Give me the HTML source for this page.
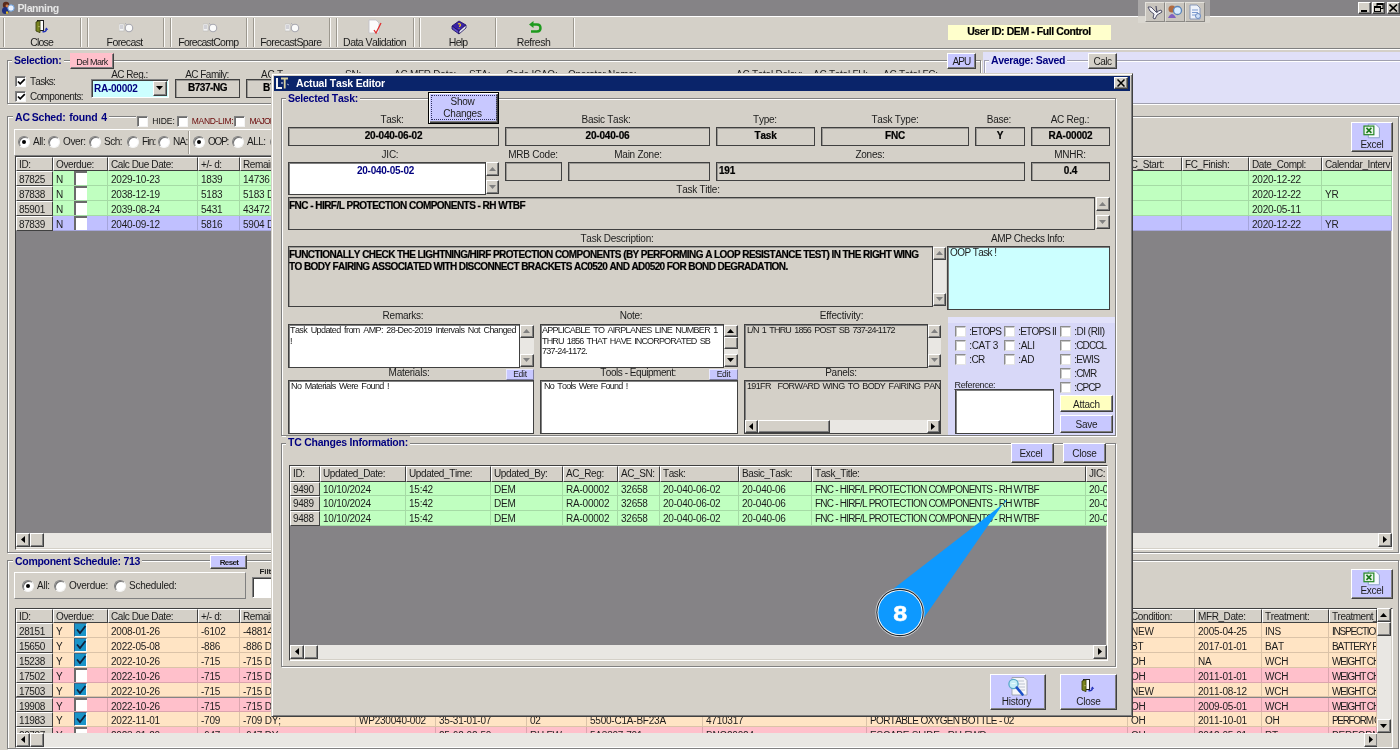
<!DOCTYPE html>
<html>
<head>
<meta charset="utf-8">
<title>Planning</title>
<style>
*{box-sizing:border-box;margin:0;padding:0}
html,body{width:1400px;height:753px;overflow:hidden;background:#d4d0c8;font-family:"Liberation Sans",sans-serif;font-size:10px;color:#1c1c1c;font-kerning:none}
.a{position:absolute}
.t{position:absolute;white-space:nowrap;line-height:12px;font-size:10px;letter-spacing:-0.25px}
.b{font-weight:bold}
.nv{color:#00007f}
.c{text-align:center}
.fld{position:absolute;border:1px solid #404040;box-shadow:inset 1px 1px 0 #9a9894;background:#d4d0c8;font-weight:bold;font-size:10px;letter-spacing:-0.2px;line-height:12px;overflow:hidden;white-space:nowrap;padding-top:2px;color:#000;-webkit-text-stroke:0.2px #000}
.fld.l{padding-left:2px}
.ta{position:absolute;border:1px solid #404040;box-shadow:inset 1px 1px 0 #808080;background:#fff;font-size:9px;line-height:11px;overflow:hidden;padding:2px 2px}
.grp{position:absolute;border:1px solid #808080;box-shadow:1px 1px 0 #fff, inset 1px 1px 0 #fff}
.glab{position:absolute;background:#d4d0c8;font-weight:bold;color:#00007f;font-size:10.5px;line-height:12px;white-space:nowrap;padding:0 2px}
.btn{position:absolute;border:1px solid;border-color:#fff #404040 #404040 #fff;box-shadow:inset -1px -1px 0 #808080;background:#d4d0c8;text-align:center;font-size:10px;letter-spacing:-0.25px;line-height:12px;white-space:nowrap;overflow:hidden}
.lav{background:#c8c8ff}
.cb{position:absolute;width:11px;height:11px;background:#fff;border:1px solid;border-color:#808080 #f4f4f4 #f4f4f4 #808080;box-shadow:inset 1px 1px 0 #6c6c6c}
.rd{position:absolute;width:12px;height:12px;border-radius:50%;background:#fff;border:1px solid;border-color:#808080 #f4f4f4 #f4f4f4 #808080;box-shadow:inset 1px 1px 0 #707070}
.rd.on:after{content:"";position:absolute;left:3px;top:3px;width:4px;height:4px;background:#000;border-radius:50%}
.grid{position:absolute;background:#858386;overflow:hidden;border:1px solid #404040;border-right-color:#fff;border-bottom-color:#fff;box-shadow:inset -1px -1px 0 #d4d0c8}
.row{position:absolute;left:0;height:15px;white-space:nowrap}
.cell{position:absolute;top:0;height:15px;border-right:1px solid rgba(0,0,0,0.14);border-bottom:1px solid rgba(0,0,0,0.14);font-size:10px;letter-spacing:-0.22px;line-height:15px;padding-left:3px;overflow:hidden;white-space:nowrap}
.hc{position:absolute;top:0;height:15px;background:#d4d0c8;border:1px solid;border-color:#fff #404040 #404040 #fff;font-size:10px;letter-spacing:-0.4px;line-height:13px;padding-left:2px;overflow:hidden;white-space:nowrap}
.g{background:#c0ffc0}.s{background:#c0c0ff}.p{background:#ffe4c4}.k{background:#ffc0cb}
.sb{position:absolute;background:#e9e7e3}
.sbb{position:absolute;background:#d4d0c8;border:1px solid;border-color:#fff #404040 #404040 #fff;box-shadow:inset -1px -1px 0 #808080}
.vsep{position:absolute;width:2px;border-left:1px solid #9c988f;border-right:1px solid #fbfaf8}

</style>
</head>
<body>
<div style="position:absolute;left:0;top:0;width:1400px;height:753px;will-change:transform">
<div class="a" style="left:0px;top:0px;width:1400px;height:16px;background:#858386"></div>
<svg class="a" style="left:1px;top:1px" width="15" height="14" viewBox="0 0 15 14"><circle cx="5" cy="4" r="3.2" fill="#5a2a1a"/><circle cx="4.5" cy="9.5" r="3.5" fill="#203080"/><circle cx="10" cy="7" r="3.2" fill="#e8f0ff" stroke="#6aa0e0" stroke-width="1"/><circle cx="6" cy="5" r="1.4" fill="#d08050"/><rect x="5" y="10.5" width="2.2" height="2.2" fill="#e8c020"/></svg>
<div class="t b" style="left:17.5px;top:2px;color:#e6e6e6;font-size:10.5px;letter-spacing:-0.393px;">Planning</div>
<div class="btn" style="left:1358px;top:2px;width:13px;height:12px;"></div>
<div class="btn" style="left:1372px;top:2px;width:13px;height:12px;"></div>
<div class="btn" style="left:1387px;top:2px;width:13px;height:12px;"></div>
<div class="a" style="left:1361px;top:10px;width:6px;height:2px;background:#000"></div>
<svg class="a" style="left:1374px;top:3px" width="10" height="10" viewBox="0 0 10 10"><rect x="3" y="0.5" width="6" height="5" fill="none" stroke="#000" stroke-width="1"/><rect x="3" y="0" width="6" height="2" fill="#000"/><rect x="0.5" y="3.5" width="6" height="5" fill="#d4d0c8" stroke="#000" stroke-width="1"/><rect x="0" y="3" width="7" height="2" fill="#000"/></svg>
<svg class="a" style="left:1389px;top:4px" width="9" height="8" viewBox="0 0 9 8"><path d="M0.5 0.5 L8 7.5 M8 0.5 L0.5 7.5" stroke="#000" stroke-width="1.6"/></svg>
<div class="a" style="left:0px;top:16px;width:1400px;height:1px;background:#fff"></div>
<div class="a" style="left:0px;top:48px;width:1400px;height:1px;background:#808080"></div>
<div class="a" style="left:0px;top:49px;width:1400px;height:1px;background:#fff"></div>
<div class="vsep" style="left:3px;top:18px;width:2px;height:29px;"></div>
<div class="vsep" style="left:80px;top:18px;width:2px;height:29px;"></div>
<div class="vsep" style="left:87px;top:18px;width:2px;height:29px;"></div>
<div class="vsep" style="left:163px;top:18px;width:2px;height:29px;"></div>
<div class="vsep" style="left:170px;top:18px;width:2px;height:29px;"></div>
<div class="vsep" style="left:246px;top:18px;width:2px;height:29px;"></div>
<div class="vsep" style="left:253px;top:18px;width:2px;height:29px;"></div>
<div class="vsep" style="left:329px;top:18px;width:2px;height:29px;"></div>
<div class="vsep" style="left:336px;top:18px;width:2px;height:29px;"></div>
<div class="vsep" style="left:413px;top:18px;width:2px;height:29px;"></div>
<div class="vsep" style="left:419px;top:18px;width:2px;height:29px;"></div>
<div class="vsep" style="left:495px;top:18px;width:2px;height:29px;"></div>
<div class="vsep" style="left:573px;top:18px;width:2px;height:29px;"></div>
<div class="t c " style="left:-8.399999999999999px;top:35.5px;width:100px;font-size:10.5px;letter-spacing:-0.872px;">Close</div>
<div class="t c " style="left:74.6px;top:35.5px;width:100px;font-size:10.5px;letter-spacing:-0.607px;">Forecast</div>
<div class="t c " style="left:158.29999999999998px;top:35.5px;width:100px;font-size:10.5px;letter-spacing:-0.738px;">ForecastComp</div>
<div class="t c " style="left:240.90000000000003px;top:35.5px;width:100px;font-size:10.5px;letter-spacing:-0.583px;">ForecastSpare</div>
<div class="t c " style="left:324.6px;top:35.5px;width:100px;font-size:10.5px;letter-spacing:-0.548px;">Data Validation</div>
<div class="t c " style="left:408.1px;top:35.5px;width:100px;font-size:10.5px;letter-spacing:-0.777px;">Help</div>
<div class="t c " style="left:483.6px;top:35.5px;width:100px;font-size:10.5px;letter-spacing:-0.467px;">Refresh</div>
<svg class="a" style="left:35px;top:19px" width="14" height="15" viewBox="0 0 14 15"><rect x="2.5" y="1.5" width="6" height="10" fill="#fff" stroke="#202020" stroke-width="1"/><path d="M1 3 L5 1.8 V13.6 L1 12 Z" fill="#7a8420" stroke="#3c4410" stroke-width="0.9"/><path d="M4 7 V8.2" stroke="#e8e0a0" stroke-width="0.8"/><path d="M7.5 12.6 Q11 13.4 11.4 10.4" stroke="#2030b8" stroke-width="1.5" fill="none"/><path d="M9.6 10.6 L11.6 8.6 L13.2 11 Z" fill="#2030b8"/></svg>
<svg class="a" style="left:119px;top:21px" width="16" height="13" viewBox="0 0 16 13"><rect x="0" y="3" width="5" height="7" fill="#f4f4f4" stroke="#b8b8b8" stroke-width="0.6"/><path d="M1 5 H4 M1 7 H4" stroke="#9090a0" stroke-width="0.7"/><circle cx="10" cy="7" r="3.7" fill="#fafafa" stroke="#a8a8b0" stroke-width="1.1"/><path d="M6 2 L8 4" stroke="#b0b0b8" stroke-width="1"/></svg>
<svg class="a" style="left:203px;top:21px" width="16" height="13" viewBox="0 0 16 13"><rect x="0" y="3" width="5" height="7" fill="#f4f4f4" stroke="#b8b8b8" stroke-width="0.6"/><path d="M1 5 H4 M1 7 H4" stroke="#9090a0" stroke-width="0.7"/><circle cx="10" cy="7" r="3.7" fill="#fafafa" stroke="#a8a8b0" stroke-width="1.1"/><path d="M6 2 L8 4" stroke="#b0b0b8" stroke-width="1"/></svg>
<svg class="a" style="left:285px;top:21px" width="16" height="13" viewBox="0 0 16 13"><rect x="0" y="3" width="5" height="7" fill="#f4f4f4" stroke="#b8b8b8" stroke-width="0.6"/><path d="M1 5 H4 M1 7 H4" stroke="#9090a0" stroke-width="0.7"/><circle cx="10" cy="7" r="3.7" fill="#fafafa" stroke="#a8a8b0" stroke-width="1.1"/><path d="M6 2 L8 4" stroke="#b0b0b8" stroke-width="1"/></svg>
<svg class="a" style="left:368px;top:19px" width="16" height="16" viewBox="0 0 16 16"><path d="M1 1 H8 L11 4 V14 H1 Z" fill="#fbfbfb" stroke="#c0c0c8" stroke-width="0.8"/><path d="M6 11 L8 14 L13 4" stroke="#e03030" stroke-width="1.3" fill="none"/></svg>
<svg class="a" style="left:451px;top:20px" width="16" height="15" viewBox="0 0 16 15"><path d="M1 6 L8 1 L15 5 L8 11 Z" fill="#3a22a8" stroke="#1a0e60" stroke-width="0.8"/><path d="M1 6 L8 11 V14 L1 9 Z" fill="#5a48c8" stroke="#1a0e60" stroke-width="0.8"/><path d="M8 11 L15 5 V8 L8 14 Z" fill="#e8e8f4" stroke="#1a0e60" stroke-width="0.8"/><path d="M7 4 Q9 3 9.5 5 Q9 6.5 8 6.5 M8 8 V8.6" stroke="#f0d020" stroke-width="1.2" fill="none"/></svg>
<svg class="a" style="left:528px;top:21px" width="14" height="13" viewBox="0 0 14 13"><path d="M4 3.5 H9 Q12.5 3.5 12.5 7 Q12.5 10.5 9 10.5 H3" stroke="#1e9a1e" stroke-width="2.4" fill="none"/><path d="M5.5 0 L1 3.5 L5.5 7 Z" fill="#1e9a1e"/></svg>
<div class="a" style="left:1138px;top:0px;width:72px;height:16px;background:#a9a7a7"></div>
<div class="a" style="left:1138px;top:16px;width:72px;height:7px;background:#dad7d0"></div>
<div class="a" style="left:1145px;top:2px;width:20px;height:20px;background:#c9c5be;border:1px solid;border-color:#e4e2dc #8a8884 #8a8884 #e4e2dc"></div>
<div class="a" style="left:1165px;top:2px;width:20px;height:20px;background:#c9c5be;border:1px solid;border-color:#e4e2dc #8a8884 #8a8884 #e4e2dc"></div>
<div class="a" style="left:1185px;top:2px;width:20px;height:20px;background:#c9c5be;border:1px solid;border-color:#e4e2dc #8a8884 #8a8884 #e4e2dc"></div>
<svg class="a" style="left:1147px;top:4px" width="16" height="16" viewBox="0 0 16 16"><path d="M1 3 L4 3 L9 8 L14 6 L15 8 L10 11 L8 15 L6 14 L7 10 L3 7 Z" fill="#f4f4f8" stroke="#505068" stroke-width="1"/><path d="M9 2 L10 9" stroke="#505068" stroke-width="1.2"/></svg>
<svg class="a" style="left:1167px;top:4px" width="16" height="16" viewBox="0 0 16 16"><circle cx="5" cy="5" r="3.5" fill="#b06a40"/><path d="M1 14 Q5 6 9 14 Z" fill="#8060c0"/><circle cx="10.5" cy="6.5" r="4" fill="#d8ecff" stroke="#5a84b8" stroke-width="1.3"/></svg>
<svg class="a" style="left:1187px;top:4px" width="16" height="16" viewBox="0 0 16 16"><path d="M3 1 H10 L13 4 V15 H3 Z" fill="#eef2fa" stroke="#8898b8" stroke-width="1"/><path d="M5 6 H11 M5 8.5 H11 M5 11 H9" stroke="#7a9ad0" stroke-width="1"/><circle cx="11" cy="12" r="2.5" fill="#cfe0f8" stroke="#6a8ac0"/></svg>
<div class="a" style="left:948px;top:25px;width:163px;height:15px;background:#ffffcc"></div>
<div class="t c b" style="left:939.0px;top:25px;width:180px;color:#000;-webkit-text-stroke:0.2px #000;font-size:10.5px;letter-spacing:-0.413px;">User ID: DEM - Full Control</div>
<div class="grp" style="left:7px;top:60px;width:974px;height:44px;"></div>
<div class="glab" style="left:12px;top:54px;font-size:10.5px;letter-spacing:-0.269px;">Selection:</div>
<div class="btn " style="left:70px;top:53px;width:44px;height:16px;padding-top:2px;background:#ffc0cb;border-color:#ffc0cb #404040 #404040 #ffc0cb;font-size:9px;letter-spacing:-0.589px;">Del Mark</div>
<div class="cb" style="left:15px;top:76px;"><svg width="9" height="9" viewBox="0 0 9 9" style="position:absolute;left:1px;top:1px"><path d="M1 3.5 L3.2 5.8 L7.8 1.2" stroke="#000" stroke-width="1.7" fill="none"/></svg></div>
<div class="t " style="left:30px;top:76px;font-size:10px;letter-spacing:-0.742px;">Tasks:</div>
<div class="cb" style="left:15px;top:91px;"><svg width="9" height="9" viewBox="0 0 9 9" style="position:absolute;left:1px;top:1px"><path d="M1 3.5 L3.2 5.8 L7.8 1.2" stroke="#000" stroke-width="1.7" fill="none"/></svg></div>
<div class="t " style="left:30px;top:91px;font-size:10px;letter-spacing:-0.589px;">Components:</div>
<div class="t c " style="left:89.5px;top:69px;width:80px;font-size:10px;letter-spacing:-0.497px;">AC Reg.:</div>
<div class="a" style="left:91px;top:79px;width:78px;height:19px;background:#ccffff;border:1px solid;border-color:#808080 #fff #fff #808080;box-shadow:inset 1px 1px 0 #404040"></div>
<div class="t b nv" style="left:94px;top:83px;font-size:10px">RA-00002</div>
<div class="sbb" style="left:153px;top:81px;width:14px;height:15px"></div><svg class="a" style="left:156px;top:86px" width="7" height="4" viewBox="0 0 7 4"><path d="M0 0 L7 0 L3.5 4 Z" fill="#000"/></svg>
<div class="t c " style="left:167.0px;top:69px;width:80px;font-size:10px;letter-spacing:-0.531px;">AC Family:</div>
<div class="fld c" style="left:175px;top:79px;width:65px;height:19px;font-size:10px;letter-spacing:-0.464px;">B737-NG</div>
<div class="t " style="left:261px;top:69px;font-size:10px">AC T</div>
<div class="fld l" style="left:246px;top:79px;width:54px;height:19px;padding-left:16px">B737-800</div>
<div class="t " style="left:345px;top:69px;font-size:10px">SN:</div>
<div class="t " style="left:394px;top:69px;font-size:10px">AC MFR Date:</div>
<div class="t " style="left:469px;top:69px;font-size:10px">STA:</div>
<div class="t " style="left:506px;top:69px;font-size:10px">Code ICAO:</div>
<div class="t " style="left:568px;top:69px;font-size:10px">Operator Name:</div>
<div class="t " style="left:736px;top:69px;font-size:10px">AC Total Delay:</div>
<div class="t " style="left:813px;top:69px;font-size:10px">AC Total FH:</div>
<div class="t " style="left:883px;top:69px;font-size:10px">AC Total FC:</div>
<div class="btn lav" style="left:947px;top:53px;width:29px;height:16px;padding-top:2px;font-size:10px;letter-spacing:-0.921px;">APU</div>
<div class="a" style="left:983px;top:52px;width:417px;height:53px;background:#e0e0f8"></div>
<div class="a" style="left:984px;top:60px;width:420px;height:44px;border:1px solid #a0a0b0;box-shadow:inset 1px 1px 0 #fff,0 1px 0 #fff"></div>
<div class="glab" style="left:989px;top:54px;background:#e0e0f8;font-size:10.5px;letter-spacing:-0.343px;">Average: Saved</div>
<div class="btn " style="left:1088px;top:53px;width:29px;height:16px;padding-top:2px;font-size:10px;letter-spacing:-0.479px;">Calc</div>
<div class="grp" style="left:7px;top:116px;width:1392px;height:437px;"></div>
<div class="glab" style="left:13px;top:111px;font-size:10.5px;letter-spacing:-0.2px;word-spacing:-0.8px">AC Sched:&nbsp; found&nbsp; 4</div>
<div class="a" style="left:136px;top:113px;width:600px;height:14px;background:#d4d0c8"></div>
<div class="cb" style="left:137px;top:116px;"></div>
<div class="t " style="left:152.3px;top:115px;color:#101010;font-size:8.5px;letter-spacing:-0.034px;">HIDE:</div>
<div class="cb" style="left:177px;top:116px;"></div>
<div class="t " style="left:191.8px;top:115px;color:#6a0808;font-size:8.5px;letter-spacing:-0.321px;">MAND-LIM:</div>
<div class="cb" style="left:234px;top:116px;"></div>
<div class="t " style="left:249.6px;top:115px;color:#6a0808;font-size:8.5px;letter-spacing:-0.870px;">MAJOR</div>
<div class="a" style="left:14px;top:129px;width:500px;height:27px;border:1px solid;border-color:#fff #808080 #808080 #fff"></div>
<div class="vsep" style="left:188px;top:131px;width:2px;height:23px;"></div>
<div class="rd on" style="left:18px;top:136px"></div>
<div class="t " style="left:33px;top:136px;font-size:10px;letter-spacing:-0.402px;">All:</div>
<div class="rd" style="left:48px;top:136px"></div>
<div class="t " style="left:63px;top:136px;font-size:10px;letter-spacing:-0.371px;">Over:</div>
<div class="rd" style="left:89px;top:136px"></div>
<div class="t " style="left:104px;top:136px;font-size:10px;letter-spacing:-0.454px;">Sch:</div>
<div class="rd" style="left:127px;top:136px"></div>
<div class="t " style="left:142px;top:136px;font-size:10px;letter-spacing:-0.818px;">Fin:</div>
<div class="rd" style="left:158px;top:136px"></div>
<div class="t " style="left:173px;top:136px;font-size:10px;letter-spacing:-0.757px;">NA:</div>
<div class="rd on" style="left:193px;top:136px"></div>
<div class="t " style="left:208px;top:136px;font-size:10px;letter-spacing:-1.204px;">OOP:</div>
<div class="rd" style="left:232px;top:136px"></div>
<div class="t " style="left:247px;top:136px;font-size:10px;letter-spacing:-0.495px;">ALL:</div>
<div class="rd" style="left:270px;top:136px"></div>
<div class="btn lav" style="left:1351px;top:122px;width:42px;height:30px;padding-top:16px;font-size:10px">Excel</div>
<svg class="a" style="left:1363px;top:123px" width="18" height="16" viewBox="0 0 14 13"><path d="M4 1 H10 L13 4 V12 H4 Z" fill="#f4f8ff" stroke="#8aa0c8" stroke-width="0.8"/><rect x="0.5" y="2.5" width="8" height="7" fill="#e8f4e8" stroke="#2a8a2a" stroke-width="1"/><path d="M2.5 4 L6.5 8 M6.5 4 L2.5 8" stroke="#1a7a1a" stroke-width="1.3"/></svg>
<div class="grid" style="left:15px;top:156px;width:1378px;height:394px"><div class="hc" style="left:0px;width:37px;height:14px;line-height:13px">ID:</div><div class="hc" style="left:37px;width:55px;height:14px;line-height:13px">Overdue:</div><div class="hc" style="left:92px;width:90px;height:14px;line-height:13px">Calc Due Date:</div><div class="hc" style="left:182px;width:42px;height:14px;line-height:13px">+/- d:</div><div class="hc" style="left:224px;width:90px;height:14px;line-height:13px">Remain:</div><div class="hc" style="left:314px;width:792px;height:14px;line-height:13px"></div><div class="hc" style="left:1106px;width:60px;height:14px;line-height:13px">FC_Start:</div><div class="hc" style="left:1166px;width:67px;height:14px;line-height:13px">FC_Finish:</div><div class="hc" style="left:1233px;width:73px;height:14px;line-height:13px">Date_Compl:</div><div class="hc" style="left:1306px;width:70px;height:14px;line-height:13px">Calendar_Interv</div><div class="row" style="top:14.00px;height:15px"><div class="hc" style="left:0px;width:37px;height:15px;line-height:15.399999999999999px">87825</div><div class="cell g" style="left:37px;width:55px;height:15px;line-height:17.4px">N<div class="a" style="left:21px;top:0;width:13px;height:14px;background:#fff;border-top:2px solid #6a6a6a;border-left:2px solid #6a6a6a"></div></div><div class="cell g" style="left:92px;width:90px;height:15px;line-height:17.4px">2029-10-23</div><div class="cell g" style="left:182px;width:42px;height:15px;line-height:17.4px">1839</div><div class="cell g" style="left:224px;width:90px;height:15px;line-height:17.4px">14736 FH</div><div class="cell g" style="left:314px;width:792px;height:15px;line-height:17.4px"></div><div class="cell g" style="left:1106px;width:60px;height:15px;line-height:17.4px"></div><div class="cell g" style="left:1166px;width:67px;height:15px;line-height:17.4px"></div><div class="cell g" style="left:1233px;width:73px;height:15px;line-height:17.4px">2020-12-22</div><div class="cell g" style="left:1306px;width:70px;height:15px;line-height:17.4px"></div></div><div class="row" style="top:29.00px;height:15px"><div class="hc" style="left:0px;width:37px;height:15px;line-height:15.399999999999999px">87838</div><div class="cell g" style="left:37px;width:55px;height:15px;line-height:17.4px">N<div class="a" style="left:21px;top:0;width:13px;height:14px;background:#fff;border-top:2px solid #6a6a6a;border-left:2px solid #6a6a6a"></div></div><div class="cell g" style="left:92px;width:90px;height:15px;line-height:17.4px">2038-12-19</div><div class="cell g" style="left:182px;width:42px;height:15px;line-height:17.4px">5183</div><div class="cell g" style="left:224px;width:90px;height:15px;line-height:17.4px">5183 DY</div><div class="cell g" style="left:314px;width:792px;height:15px;line-height:17.4px"></div><div class="cell g" style="left:1106px;width:60px;height:15px;line-height:17.4px"></div><div class="cell g" style="left:1166px;width:67px;height:15px;line-height:17.4px"></div><div class="cell g" style="left:1233px;width:73px;height:15px;line-height:17.4px">2020-12-22</div><div class="cell g" style="left:1306px;width:70px;height:15px;line-height:17.4px">YR</div></div><div class="row" style="top:44.00px;height:15px"><div class="hc" style="left:0px;width:37px;height:15px;line-height:15.399999999999999px">85901</div><div class="cell g" style="left:37px;width:55px;height:15px;line-height:17.4px">N<div class="a" style="left:21px;top:0;width:13px;height:14px;background:#fff;border-top:2px solid #6a6a6a;border-left:2px solid #6a6a6a"></div></div><div class="cell g" style="left:92px;width:90px;height:15px;line-height:17.4px">2039-08-24</div><div class="cell g" style="left:182px;width:42px;height:15px;line-height:17.4px">5431</div><div class="cell g" style="left:224px;width:90px;height:15px;line-height:17.4px">43472 FH</div><div class="cell g" style="left:314px;width:792px;height:15px;line-height:17.4px"></div><div class="cell g" style="left:1106px;width:60px;height:15px;line-height:17.4px"></div><div class="cell g" style="left:1166px;width:67px;height:15px;line-height:17.4px"></div><div class="cell g" style="left:1233px;width:73px;height:15px;line-height:17.4px">2020-05-11</div><div class="cell g" style="left:1306px;width:70px;height:15px;line-height:17.4px"></div></div><div class="row" style="top:59.00px;height:15px"><div class="hc" style="left:0px;width:37px;height:15px;line-height:15.399999999999999px">87839</div><div class="cell s" style="left:37px;width:55px;height:15px;line-height:17.4px">N<div class="a" style="left:21px;top:0;width:13px;height:14px;background:#fff;border-top:2px solid #6a6a6a;border-left:2px solid #6a6a6a"></div></div><div class="cell s" style="left:92px;width:90px;height:15px;line-height:17.4px">2040-09-12</div><div class="cell s" style="left:182px;width:42px;height:15px;line-height:17.4px">5816</div><div class="cell s" style="left:224px;width:90px;height:15px;line-height:17.4px">5904 DY</div><div class="cell s" style="left:314px;width:792px;height:15px;line-height:17.4px"></div><div class="cell s" style="left:1106px;width:60px;height:15px;line-height:17.4px"></div><div class="cell s" style="left:1166px;width:67px;height:15px;line-height:17.4px"></div><div class="cell s" style="left:1233px;width:73px;height:15px;line-height:17.4px">2020-12-22</div><div class="cell s" style="left:1306px;width:70px;height:15px;line-height:17.4px">YR</div></div></div>
<div class="sb" style="left:16px;top:533px;width:1376px;height:15px;"></div>
<div class="sbb" style="left:16px;top:533px;width:14px;height:14px"></div><svg class="a" style="left:21px;top:536px" width="4" height="7" viewBox="0 0 4 7"><path d="M4 0 L4 7 L0 3.5 Z" fill="#000"/></svg>
<div class="sbb" style="left:30px;top:533px;width:14px;height:14px"></div>
<div class="sbb" style="left:1378px;top:533px;width:14px;height:14px"></div><svg class="a" style="left:1383px;top:536px" width="4" height="7" viewBox="0 0 4 7"><path d="M0 0 L0 7 L4 3.5 Z" fill="#000"/></svg>
<div class="grp" style="left:7px;top:560px;width:1392px;height:189px;"></div>
<div class="a" style="left:0px;top:750px;width:1400px;height:3px;background:#fff"></div>
<div class="glab" style="left:13px;top:555px;font-size:10.5px;letter-spacing:-0.298px;">Component Schedule: 713</div>
<div class="btn lav b" style="left:210px;top:555px;width:37px;height:14px;padding-top:1px;font-size:8px;letter-spacing:-0.639px;padding-left:1px;">Reset</div>
<div class="a" style="left:14px;top:572px;width:232px;height:27px;border:1px solid;border-color:#fff #808080 #808080 #fff"></div>
<div class="rd on" style="left:22px;top:580px"></div>
<div class="t " style="left:37px;top:580px;font-size:10px">All:</div>
<div class="rd" style="left:54px;top:580px"></div>
<div class="t " style="left:69px;top:580px;font-size:10px">Overdue:</div>
<div class="rd" style="left:114px;top:580px"></div>
<div class="t " style="left:129px;top:580px;font-size:10px">Scheduled:</div>
<div class="t b" style="left:259.5px;top:566px;font-size:8px;letter-spacing:-0.094px;">Filter</div>
<div class="a" style="left:252px;top:577px;width:60px;height:21px;background:#fff;border:1px solid;border-color:#808080 #fff #fff #808080;box-shadow:inset 1px 1px 0 #404040"></div>
<div class="btn lav" style="left:1351px;top:569px;width:42px;height:30px;padding-top:15px;font-size:10px">Excel</div>
<svg class="a" style="left:1363px;top:570px" width="18" height="16" viewBox="0 0 14 13"><path d="M4 1 H10 L13 4 V12 H4 Z" fill="#f4f8ff" stroke="#8aa0c8" stroke-width="0.8"/><rect x="0.5" y="2.5" width="8" height="7" fill="#e8f4e8" stroke="#2a8a2a" stroke-width="1"/><path d="M2.5 4 L6.5 8 M6.5 4 L2.5 8" stroke="#1a7a1a" stroke-width="1.3"/></svg>
<div class="grid" style="left:15px;top:608px;width:1378px;height:140px"><div class="hc" style="left:0px;width:37px;height:14px;line-height:13px">ID:</div><div class="hc" style="left:37px;width:55px;height:14px;line-height:13px">Overdue:</div><div class="hc" style="left:92px;width:90px;height:14px;line-height:13px">Calc Due Date:</div><div class="hc" style="left:182px;width:42px;height:14px;line-height:13px">+/- d:</div><div class="hc" style="left:224px;width:116px;height:14px;line-height:13px">Remain:</div><div class="hc" style="left:340px;width:80px;height:14px;line-height:13px">WP:</div><div class="hc" style="left:420px;width:91px;height:14px;line-height:13px">ATA:</div><div class="hc" style="left:511px;width:60px;height:14px;line-height:13px">Pos:</div><div class="hc" style="left:571px;width:116px;height:14px;line-height:13px">PN:</div><div class="hc" style="left:687px;width:164px;height:14px;line-height:13px">SN:</div><div class="hc" style="left:851px;width:261px;height:14px;line-height:13px">Description:</div><div class="hc" style="left:1112px;width:67px;height:14px;line-height:13px">Condition:</div><div class="hc" style="left:1179px;width:67px;height:14px;line-height:13px">MFR_Date:</div><div class="hc" style="left:1246px;width:67px;height:14px;line-height:13px">Treatment:</div><div class="hc" style="left:1313px;width:48px;height:14px;line-height:13px"><span style="font-size:10px;letter-spacing:-0.514px;">Treatment_</span></div><div class="row" style="top:14.00px;height:14.9px"><div class="hc" style="left:0px;width:37px;height:14.9px;line-height:15.3px">28151</div><div class="cell p" style="left:37px;width:55px;height:14.9px;line-height:17.3px">Y<div class="a" style="left:21px;top:0;width:13px;height:13.9px;background:#1a94c8;border-top:1px solid #3a6a8a;border-left:1px solid #2a5a80;border-bottom:1px solid #fff;border-right:1px solid #fff"><svg width="12" height="13" viewBox="0 0 12 13" style="position:absolute;left:0;top:0"><path d="M2 5.5 L5 9 L10.5 2" stroke="#10203a" stroke-width="1.8" fill="none"/></svg></div></div><div class="cell p" style="left:92px;width:90px;height:14.9px;line-height:17.3px">2008-01-26</div><div class="cell p" style="left:182px;width:42px;height:14.9px;line-height:17.3px">-6102</div><div class="cell p" style="left:224px;width:116px;height:14.9px;line-height:17.3px">-48814 FH</div><div class="cell p" style="left:340px;width:80px;height:14.9px;line-height:17.3px"></div><div class="cell p" style="left:420px;width:91px;height:14.9px;line-height:17.3px"></div><div class="cell p" style="left:511px;width:60px;height:14.9px;line-height:17.3px"></div><div class="cell p" style="left:571px;width:116px;height:14.9px;line-height:17.3px"></div><div class="cell p" style="left:687px;width:164px;height:14.9px;line-height:17.3px"></div><div class="cell p" style="left:851px;width:261px;height:14.9px;line-height:17.3px"></div><div class="cell p" style="left:1112px;width:67px;height:14.9px;line-height:17.3px">NEW</div><div class="cell p" style="left:1179px;width:67px;height:14.9px;line-height:17.3px">2005-04-25</div><div class="cell p" style="left:1246px;width:67px;height:14.9px;line-height:17.3px">INS</div><div class="cell p" style="left:1313px;width:48px;height:14.9px;line-height:17.3px"><span style="font-size:10px;letter-spacing:-1.212px;">INSPECTION</span></div></div><div class="row" style="top:28.90px;height:14.9px"><div class="hc" style="left:0px;width:37px;height:14.9px;line-height:15.3px">15650</div><div class="cell p" style="left:37px;width:55px;height:14.9px;line-height:17.3px">Y<div class="a" style="left:21px;top:0;width:13px;height:13.9px;background:#1a94c8;border-top:1px solid #3a6a8a;border-left:1px solid #2a5a80;border-bottom:1px solid #fff;border-right:1px solid #fff"><svg width="12" height="13" viewBox="0 0 12 13" style="position:absolute;left:0;top:0"><path d="M2 5.5 L5 9 L10.5 2" stroke="#10203a" stroke-width="1.8" fill="none"/></svg></div></div><div class="cell p" style="left:92px;width:90px;height:14.9px;line-height:17.3px">2022-05-08</div><div class="cell p" style="left:182px;width:42px;height:14.9px;line-height:17.3px">-886</div><div class="cell p" style="left:224px;width:116px;height:14.9px;line-height:17.3px">-886 DY</div><div class="cell p" style="left:340px;width:80px;height:14.9px;line-height:17.3px"></div><div class="cell p" style="left:420px;width:91px;height:14.9px;line-height:17.3px"></div><div class="cell p" style="left:511px;width:60px;height:14.9px;line-height:17.3px"></div><div class="cell p" style="left:571px;width:116px;height:14.9px;line-height:17.3px"></div><div class="cell p" style="left:687px;width:164px;height:14.9px;line-height:17.3px"></div><div class="cell p" style="left:851px;width:261px;height:14.9px;line-height:17.3px"></div><div class="cell p" style="left:1112px;width:67px;height:14.9px;line-height:17.3px">BT</div><div class="cell p" style="left:1179px;width:67px;height:14.9px;line-height:17.3px">2017-01-01</div><div class="cell p" style="left:1246px;width:67px;height:14.9px;line-height:17.3px">BAT</div><div class="cell p" style="left:1313px;width:48px;height:14.9px;line-height:17.3px"><span style="font-size:10px;letter-spacing:-1.069px;">BATTERY R</span></div></div><div class="row" style="top:43.80px;height:14.9px"><div class="hc" style="left:0px;width:37px;height:14.9px;line-height:15.3px">15238</div><div class="cell p" style="left:37px;width:55px;height:14.9px;line-height:17.3px">Y<div class="a" style="left:21px;top:0;width:13px;height:13.9px;background:#1a94c8;border-top:1px solid #3a6a8a;border-left:1px solid #2a5a80;border-bottom:1px solid #fff;border-right:1px solid #fff"><svg width="12" height="13" viewBox="0 0 12 13" style="position:absolute;left:0;top:0"><path d="M2 5.5 L5 9 L10.5 2" stroke="#10203a" stroke-width="1.8" fill="none"/></svg></div></div><div class="cell p" style="left:92px;width:90px;height:14.9px;line-height:17.3px">2022-10-26</div><div class="cell p" style="left:182px;width:42px;height:14.9px;line-height:17.3px">-715</div><div class="cell p" style="left:224px;width:116px;height:14.9px;line-height:17.3px">-715 DY</div><div class="cell p" style="left:340px;width:80px;height:14.9px;line-height:17.3px"></div><div class="cell p" style="left:420px;width:91px;height:14.9px;line-height:17.3px"></div><div class="cell p" style="left:511px;width:60px;height:14.9px;line-height:17.3px"></div><div class="cell p" style="left:571px;width:116px;height:14.9px;line-height:17.3px"></div><div class="cell p" style="left:687px;width:164px;height:14.9px;line-height:17.3px"></div><div class="cell p" style="left:851px;width:261px;height:14.9px;line-height:17.3px"></div><div class="cell p" style="left:1112px;width:67px;height:14.9px;line-height:17.3px">OH</div><div class="cell p" style="left:1179px;width:67px;height:14.9px;line-height:17.3px">NA</div><div class="cell p" style="left:1246px;width:67px;height:14.9px;line-height:17.3px">WCH</div><div class="cell p" style="left:1313px;width:48px;height:14.9px;line-height:17.3px"><span style="font-size:10px;letter-spacing:-1.135px;">WEIGHT CH</span></div></div><div class="row" style="top:58.70px;height:14.9px"><div class="hc" style="left:0px;width:37px;height:14.9px;line-height:15.3px">17502</div><div class="cell k" style="left:37px;width:55px;height:14.9px;line-height:17.3px">Y<div class="a" style="left:21px;top:0;width:13px;height:13.9px;background:#fff;border-top:2px solid #6a6a6a;border-left:2px solid #6a6a6a"></div></div><div class="cell k" style="left:92px;width:90px;height:14.9px;line-height:17.3px">2022-10-26</div><div class="cell k" style="left:182px;width:42px;height:14.9px;line-height:17.3px">-715</div><div class="cell k" style="left:224px;width:116px;height:14.9px;line-height:17.3px">-715 DY</div><div class="cell k" style="left:340px;width:80px;height:14.9px;line-height:17.3px"></div><div class="cell k" style="left:420px;width:91px;height:14.9px;line-height:17.3px"></div><div class="cell k" style="left:511px;width:60px;height:14.9px;line-height:17.3px"></div><div class="cell k" style="left:571px;width:116px;height:14.9px;line-height:17.3px"></div><div class="cell k" style="left:687px;width:164px;height:14.9px;line-height:17.3px"></div><div class="cell k" style="left:851px;width:261px;height:14.9px;line-height:17.3px"></div><div class="cell k" style="left:1112px;width:67px;height:14.9px;line-height:17.3px">OH</div><div class="cell k" style="left:1179px;width:67px;height:14.9px;line-height:17.3px">2011-01-01</div><div class="cell k" style="left:1246px;width:67px;height:14.9px;line-height:17.3px">WCH</div><div class="cell k" style="left:1313px;width:48px;height:14.9px;line-height:17.3px"><span style="font-size:10px;letter-spacing:-1.135px;">WEIGHT CH</span></div></div><div class="row" style="top:73.60px;height:14.9px"><div class="hc" style="left:0px;width:37px;height:14.9px;line-height:15.3px">17503</div><div class="cell p" style="left:37px;width:55px;height:14.9px;line-height:17.3px">Y<div class="a" style="left:21px;top:0;width:13px;height:13.9px;background:#1a94c8;border-top:1px solid #3a6a8a;border-left:1px solid #2a5a80;border-bottom:1px solid #fff;border-right:1px solid #fff"><svg width="12" height="13" viewBox="0 0 12 13" style="position:absolute;left:0;top:0"><path d="M2 5.5 L5 9 L10.5 2" stroke="#10203a" stroke-width="1.8" fill="none"/></svg></div></div><div class="cell p" style="left:92px;width:90px;height:14.9px;line-height:17.3px">2022-10-26</div><div class="cell p" style="left:182px;width:42px;height:14.9px;line-height:17.3px">-715</div><div class="cell p" style="left:224px;width:116px;height:14.9px;line-height:17.3px">-715 DY</div><div class="cell p" style="left:340px;width:80px;height:14.9px;line-height:17.3px"></div><div class="cell p" style="left:420px;width:91px;height:14.9px;line-height:17.3px"></div><div class="cell p" style="left:511px;width:60px;height:14.9px;line-height:17.3px"></div><div class="cell p" style="left:571px;width:116px;height:14.9px;line-height:17.3px"></div><div class="cell p" style="left:687px;width:164px;height:14.9px;line-height:17.3px"></div><div class="cell p" style="left:851px;width:261px;height:14.9px;line-height:17.3px"></div><div class="cell p" style="left:1112px;width:67px;height:14.9px;line-height:17.3px">NEW</div><div class="cell p" style="left:1179px;width:67px;height:14.9px;line-height:17.3px">2011-08-12</div><div class="cell p" style="left:1246px;width:67px;height:14.9px;line-height:17.3px">WCH</div><div class="cell p" style="left:1313px;width:48px;height:14.9px;line-height:17.3px"><span style="font-size:10px;letter-spacing:-1.135px;">WEIGHT CH</span></div></div><div class="row" style="top:88.50px;height:14.9px"><div class="hc" style="left:0px;width:37px;height:14.9px;line-height:15.3px">19908</div><div class="cell k" style="left:37px;width:55px;height:14.9px;line-height:17.3px">Y<div class="a" style="left:21px;top:0;width:13px;height:13.9px;background:#fff;border-top:2px solid #6a6a6a;border-left:2px solid #6a6a6a"></div></div><div class="cell k" style="left:92px;width:90px;height:14.9px;line-height:17.3px">2022-10-26</div><div class="cell k" style="left:182px;width:42px;height:14.9px;line-height:17.3px">-715</div><div class="cell k" style="left:224px;width:116px;height:14.9px;line-height:17.3px">-715 DY</div><div class="cell k" style="left:340px;width:80px;height:14.9px;line-height:17.3px"></div><div class="cell k" style="left:420px;width:91px;height:14.9px;line-height:17.3px"></div><div class="cell k" style="left:511px;width:60px;height:14.9px;line-height:17.3px"></div><div class="cell k" style="left:571px;width:116px;height:14.9px;line-height:17.3px"></div><div class="cell k" style="left:687px;width:164px;height:14.9px;line-height:17.3px"></div><div class="cell k" style="left:851px;width:261px;height:14.9px;line-height:17.3px"></div><div class="cell k" style="left:1112px;width:67px;height:14.9px;line-height:17.3px">OH</div><div class="cell k" style="left:1179px;width:67px;height:14.9px;line-height:17.3px">2009-05-01</div><div class="cell k" style="left:1246px;width:67px;height:14.9px;line-height:17.3px">WCH</div><div class="cell k" style="left:1313px;width:48px;height:14.9px;line-height:17.3px"><span style="font-size:10px;letter-spacing:-1.135px;">WEIGHT CH</span></div></div><div class="row" style="top:103.40px;height:14.9px"><div class="hc" style="left:0px;width:37px;height:14.9px;line-height:15.3px">11983</div><div class="cell p" style="left:37px;width:55px;height:14.9px;line-height:17.3px">Y<div class="a" style="left:21px;top:0;width:13px;height:13.9px;background:#1a94c8;border-top:1px solid #3a6a8a;border-left:1px solid #2a5a80;border-bottom:1px solid #fff;border-right:1px solid #fff"><svg width="12" height="13" viewBox="0 0 12 13" style="position:absolute;left:0;top:0"><path d="M2 5.5 L5 9 L10.5 2" stroke="#10203a" stroke-width="1.8" fill="none"/></svg></div></div><div class="cell p" style="left:92px;width:90px;height:14.9px;line-height:17.3px">2022-11-01</div><div class="cell p" style="left:182px;width:42px;height:14.9px;line-height:17.3px">-709</div><div class="cell p" style="left:224px;width:116px;height:14.9px;line-height:17.3px">-709 DY;</div><div class="cell p" style="left:340px;width:80px;height:14.9px;line-height:17.3px">WP230040-002</div><div class="cell p" style="left:420px;width:91px;height:14.9px;line-height:17.3px">35-31-01-07</div><div class="cell p" style="left:511px;width:60px;height:14.9px;line-height:17.3px">02</div><div class="cell p" style="left:571px;width:116px;height:14.9px;line-height:17.3px">5500-C1A-BF23A</div><div class="cell p" style="left:687px;width:164px;height:14.9px;line-height:17.3px">4710317</div><div class="cell p" style="left:851px;width:261px;height:14.9px;line-height:17.3px"><span style="font-size:10px;letter-spacing:-0.630px;">PORTABLE OXYGEN BOTTLE - 02</span></div><div class="cell p" style="left:1112px;width:67px;height:14.9px;line-height:17.3px">OH</div><div class="cell p" style="left:1179px;width:67px;height:14.9px;line-height:17.3px">2011-10-01</div><div class="cell p" style="left:1246px;width:67px;height:14.9px;line-height:17.3px">OH</div><div class="cell p" style="left:1313px;width:48px;height:14.9px;line-height:17.3px"><span style="font-size:10px;letter-spacing:-1.333px;">PERFORM C</span></div></div><div class="row" style="top:118.30px;height:14.9px"><div class="hc" style="left:0px;width:37px;height:14.9px;line-height:15.3px">20787</div><div class="cell k" style="left:37px;width:55px;height:14.9px;line-height:17.3px">Y<div class="a" style="left:21px;top:0;width:13px;height:13.9px;background:#fff;border-top:2px solid #6a6a6a;border-left:2px solid #6a6a6a"></div></div><div class="cell k" style="left:92px;width:90px;height:14.9px;line-height:17.3px">2023-01-20</div><div class="cell k" style="left:182px;width:42px;height:14.9px;line-height:17.3px">-647</div><div class="cell k" style="left:224px;width:116px;height:14.9px;line-height:17.3px">-647 DY;</div><div class="cell k" style="left:340px;width:80px;height:14.9px;line-height:17.3px"> </div><div class="cell k" style="left:420px;width:91px;height:14.9px;line-height:17.3px">25-62-02-50</div><div class="cell k" style="left:511px;width:60px;height:14.9px;line-height:17.3px">RH FW</div><div class="cell k" style="left:571px;width:116px;height:14.9px;line-height:17.3px">5A3307-701</div><div class="cell k" style="left:687px;width:164px;height:14.9px;line-height:17.3px">BNG20024</div><div class="cell k" style="left:851px;width:261px;height:14.9px;line-height:17.3px">ESCAPE SLIDE - RH FWD</div><div class="cell k" style="left:1112px;width:67px;height:14.9px;line-height:17.3px">OH</div><div class="cell k" style="left:1179px;width:67px;height:14.9px;line-height:17.3px">2012-05-01</div><div class="cell k" style="left:1246px;width:67px;height:14.9px;line-height:17.3px">RT</div><div class="cell k" style="left:1313px;width:48px;height:14.9px;line-height:17.3px">PERFORM</div></div></div>
<div class="sb" style="left:16px;top:733px;width:1361px;height:14px;"></div>
<div class="sbb" style="left:16px;top:733px;width:14px;height:14px"></div><svg class="a" style="left:21px;top:736px" width="4" height="7" viewBox="0 0 4 7"><path d="M4 0 L4 7 L0 3.5 Z" fill="#000"/></svg>
<div class="sbb" style="left:30px;top:733px;width:14px;height:14px"></div>
<div class="sbb" style="left:1364px;top:733px;width:14px;height:14px"></div><svg class="a" style="left:1369px;top:736px" width="4" height="7" viewBox="0 0 4 7"><path d="M0 0 L0 7 L4 3.5 Z" fill="#000"/></svg>
<div class="sb" style="left:1377px;top:608px;width:14px;height:125px;"></div>
<div class="sbb" style="left:1377px;top:608px;width:14px;height:14px"></div><svg class="a" style="left:1380px;top:613px" width="7" height="4" viewBox="0 0 7 4"><path d="M0 4 L7 4 L3.5 0 Z" fill="#000"/></svg>
<div class="sbb" style="left:1377px;top:622px;width:14px;height:14px"></div>
<div class="sbb" style="left:1377px;top:719px;width:14px;height:14px"></div><svg class="a" style="left:1380px;top:724px" width="7" height="4" viewBox="0 0 7 4"><path d="M0 0 L7 0 L3.5 4 Z" fill="#000"/></svg>
<div class="a" style="left:1377px;top:733px;width:14px;height:14px;background:#d4d0c8"></div>
<div class="a" style="left:271px;top:73px;width:862px;height:644px;background:#d4d0c8;border:1px solid;border-color:#d4d0c8 #404040 #404040 #d4d0c8;box-shadow:inset 1px 1px 0 #fff, inset -1px -1px 0 #808080"></div>
<div class="a" style="left:274px;top:76px;width:856px;height:15px;background:#0a246a"></div>
<svg class="a" style="left:276px;top:77px" width="14" height="13" viewBox="0 0 14 13"><path d="M1 1 V11 H6" stroke="#f4f4f4" stroke-width="2" fill="none"/><path d="M5 1.5 H12 M8.7 1 V11.5" stroke="#d8d0a0" stroke-width="1.8" fill="none"/><path d="M5 6 H7" stroke="#f4f4f4" stroke-width="1"/><path d="M11 7 L13 8" stroke="#c0c8e8" stroke-width="0.8"/></svg>
<div class="t b" style="left:296px;top:77px;color:#fff;font-size:10.5px;letter-spacing:-0.178px;">Actual Task Editor</div>
<div class="btn" style="left:1114px;top:77px;width:14px;height:12px;"></div>
<svg class="a" style="left:1117px;top:79px" width="8" height="8" viewBox="0 0 8 8"><path d="M0.5 0.5 L7.5 7.5 M7.5 0.5 L0.5 7.5" stroke="#000" stroke-width="1.5"/></svg>
<div class="grp" style="left:281px;top:98px;width:835px;height:338px;"></div>
<div class="glab" style="left:286px;top:92px;font-size:10.5px;letter-spacing:-0.253px;">Selected Task:</div>
<div class="a" style="left:428px;top:92px;width:71px;height:32px;background:#c8c8ff;border:1px solid #000;box-shadow:inset 1px 1px 0 #fff, inset -1px -1px 0 #404040, inset -2px -2px 0 #808080"></div>
<div class="a" style="left:431px;top:95px;width:66px;height:25px;border:1px dotted #303060"></div>
<div class="t c " style="left:427.5px;top:95.5px;width:70px;line-height:12.8px">Show<br>Changes</div>
<div class="t c " style="left:342.0px;top:114px;width:100px;">Task:</div>
<div class="t c " style="left:556.0px;top:114px;width:100px;">Basic Task:</div>
<div class="t c " style="left:715.0px;top:114px;width:100px;">Type:</div>
<div class="t c " style="left:845.0px;top:114px;width:100px;">Task Type:</div>
<div class="t c " style="left:949.0px;top:114px;width:100px;">Base:</div>
<div class="t c " style="left:1020.0px;top:114px;width:100px;">AC Reg.:</div>
<div class="fld c" style="left:288px;top:127px;width:211px;height:19px;">20-040-06-02</div>
<div class="fld c" style="left:505px;top:127px;width:205px;height:19px;">20-040-06</div>
<div class="fld c" style="left:716px;top:127px;width:99px;height:19px;">Task</div>
<div class="fld c" style="left:821px;top:127px;width:148px;height:19px;">FNC</div>
<div class="fld c" style="left:975px;top:127px;width:50px;height:19px;">Y</div>
<div class="fld c" style="left:1031px;top:127px;width:79px;height:19px;">RA-00002</div>
<div class="t c " style="left:340.0px;top:149px;width:100px;">JIC:</div>
<div class="t c " style="left:483.0px;top:149px;width:100px;">MRB Code:</div>
<div class="t c " style="left:588.0px;top:149px;width:100px;">Main Zone:</div>
<div class="t c " style="left:820.0px;top:149px;width:100px;">Zones:</div>
<div class="t c " style="left:1020.0px;top:149px;width:100px;">MNHR:</div>
<div class="ta" style="left:288px;top:162px;width:198px;height:33px;text-align:center;font-weight:bold;color:#00007f;line-height:12px;padding:2px 3px 0 0;font-size:10px;letter-spacing:-0.254px;">20-040-05-02</div>
<div class="sbb" style="left:486px;top:162px;width:13px;height:14px"></div><svg class="a" style="left:489px;top:167px" width="7" height="4" viewBox="0 0 7 4"><path d="M0 4 L7 4 L3.5 0 Z" fill="#808080"/></svg>
<div class="sbb" style="left:486px;top:180px;width:13px;height:14px"></div><svg class="a" style="left:489px;top:185px" width="7" height="4" viewBox="0 0 7 4"><path d="M0 0 L7 0 L3.5 4 Z" fill="#808080"/></svg>
<div class="fld c" style="left:505px;top:162px;width:57px;height:19px;"></div>
<div class="fld c" style="left:568px;top:162px;width:142px;height:19px;"></div>
<div class="fld l" style="left:716px;top:162px;width:309px;height:19px;">191</div>
<div class="fld c" style="left:1031px;top:162px;width:79px;height:19px;">0.4</div>
<div class="t c " style="left:648.0px;top:184px;width:100px;">Task Title:</div>
<div class="fld l" style="left:288px;top:197px;width:807px;height:33px;font-size:10px;letter-spacing:-0.533px;padding-left:0px">FNC - HIRF/L PROTECTION COMPONENTS - RH WTBF</div>
<div class="sbb" style="left:1096px;top:197px;width:14px;height:14px"></div><svg class="a" style="left:1099px;top:202px" width="7" height="4" viewBox="0 0 7 4"><path d="M0 4 L7 4 L3.5 0 Z" fill="#808080"/></svg>
<div class="sbb" style="left:1096px;top:215px;width:14px;height:14px"></div><svg class="a" style="left:1099px;top:220px" width="7" height="4" viewBox="0 0 7 4"><path d="M0 0 L7 0 L3.5 4 Z" fill="#808080"/></svg>
<div class="t c " style="left:557.0px;top:233px;width:120px;">Task Description:</div>
<div class="t c " style="left:967.7px;top:233px;width:120px;font-size:10px;letter-spacing:-0.414px;">AMP Checks Info:</div>
<div class="fld l" style="left:288px;top:246px;width:645px;height:61px;padding-left:0px;white-space:nowrap"><div style="font-size:10px;letter-spacing:-0.570px;">FUNCTIONALLY CHECK THE LIGHTNING/HIRF PROTECTION COMPONENTS (BY PERFORMING A LOOP RESISTANCE TEST) IN THE RIGHT WING</div><div style="font-size:10px;letter-spacing:-0.596px;">TO BODY FAIRING ASSOCIATED WITH DISCONNECT BRACKETS AC0520 AND AD0520 FOR BOND DEGRADATION.</div></div>
<div class="sb" style="left:933px;top:247px;width:13px;height:59px;"></div>
<div class="sbb" style="left:933px;top:247px;width:13px;height:13px"></div><svg class="a" style="left:936px;top:251px" width="7" height="4" viewBox="0 0 7 4"><path d="M0 4 L7 4 L3.5 0 Z" fill="#808080"/></svg>
<div class="sbb" style="left:933px;top:293px;width:13px;height:13px"></div><svg class="a" style="left:936px;top:297px" width="7" height="4" viewBox="0 0 7 4"><path d="M0 0 L7 0 L3.5 4 Z" fill="#808080"/></svg>
<div class="ta" style="left:947px;top:246px;width:163px;height:64px;background:#ccffff;line-height:12px;padding:0px 2px;font-size:10px;letter-spacing:-0.583px;">OOP Task !</div>
<div class="t c " style="left:353.0px;top:310px;width:100px;">Remarks:</div>
<div class="t c " style="left:581.0px;top:310px;width:100px;">Note:</div>
<div class="t c " style="left:791.5px;top:310px;width:100px;font-size:10px;letter-spacing:-0.157px;">Effectivity:</div>
<div class="ta" style="left:288px;top:324px;width:232px;height:44px;line-height:10.6px;white-space:nowrap;padding:0px 1px;color:#181818;"><div style="font-size:9px;letter-spacing:-0.574px;word-spacing:1.5px">Task Updated from AMP: 28-Dec-2019 Intervals Not Changed</div><div style="font-size:9px;letter-spacing:-0.516px;word-spacing:1.5px">!</div></div>
<div class="sb" style="left:520px;top:325px;width:14px;height:42px;"></div>
<div class="sbb" style="left:520px;top:325px;width:14px;height:13px"></div><svg class="a" style="left:523px;top:329px" width="7" height="4" viewBox="0 0 7 4"><path d="M0 4 L7 4 L3.5 0 Z" fill="#808080"/></svg>
<div class="sbb" style="left:520px;top:354px;width:14px;height:13px"></div><svg class="a" style="left:523px;top:358px" width="7" height="4" viewBox="0 0 7 4"><path d="M0 0 L7 0 L3.5 4 Z" fill="#808080"/></svg>
<div class="ta" style="left:540px;top:324px;width:184px;height:44px;line-height:10.6px;white-space:nowrap;padding:0px 1px;color:#181818;padding-left:1px"><div style="font-size:9px;letter-spacing:-0.718px;word-spacing:1.5px">APPLICABLE TO AIRPLANES LINE NUMBER 1</div><div style="font-size:9px;letter-spacing:-0.844px;word-spacing:1.5px">THRU 1856 THAT HAVE INCORPORATED SB</div><div style="font-size:9px;letter-spacing:-0.712px;word-spacing:1.5px">737-24-1172.</div></div>
<div class="sb" style="left:724px;top:325px;width:14px;height:42px;"></div>
<div class="sbb" style="left:724px;top:325px;width:14px;height:12px"></div><svg class="a" style="left:727px;top:329px" width="7" height="4" viewBox="0 0 7 4"><path d="M0 4 L7 4 L3.5 0 Z" fill="#000"/></svg>
<div class="sbb" style="left:724px;top:337px;width:14px;height:12px"></div>
<div class="sbb" style="left:724px;top:354px;width:14px;height:13px"></div><svg class="a" style="left:727px;top:358px" width="7" height="4" viewBox="0 0 7 4"><path d="M0 0 L7 0 L3.5 4 Z" fill="#000"/></svg>
<div class="ta" style="left:744px;top:324px;width:184px;height:44px;line-height:10.6px;white-space:nowrap;padding:0px 1px;color:#181818;background:#d4d0c8;padding-left:2px"><div style="font-size:9px;letter-spacing:-0.797px;word-spacing:1.5px">L/N 1 THRU 1856 POST SB 737-24-1172</div></div>
<div class="sb" style="left:928px;top:325px;width:13px;height:42px;"></div>
<div class="sbb" style="left:928px;top:325px;width:13px;height:13px"></div><svg class="a" style="left:931px;top:329px" width="7" height="4" viewBox="0 0 7 4"><path d="M0 4 L7 4 L3.5 0 Z" fill="#808080"/></svg>
<div class="sbb" style="left:928px;top:354px;width:13px;height:13px"></div><svg class="a" style="left:931px;top:358px" width="7" height="4" viewBox="0 0 7 4"><path d="M0 0 L7 0 L3.5 4 Z" fill="#808080"/></svg>
<div class="t c " style="left:359.0px;top:367px;width:100px;">Materials:</div>
<div class="t c " style="left:578.0px;top:367px;width:120px;font-size:10px;letter-spacing:-0.463px;">Tools - Equipment:</div>
<div class="t c " style="left:791.0px;top:367px;width:100px;">Panels:</div>
<div class="btn lav" style="left:506px;top:369px;width:28px;height:11px;padding-top:0px;font-size:8.5px;border-color:#e8e8ff #8080a0 #8080a0 #e8e8ff;box-shadow:none;line-height:8.6px">Edit</div>
<div class="btn lav" style="left:709px;top:369px;width:29px;height:11px;padding-top:0px;font-size:8.5px;border-color:#e8e8ff #8080a0 #8080a0 #e8e8ff;box-shadow:none;line-height:8.6px">Edit</div>
<div class="ta" style="left:288px;top:380px;width:246px;height:54px;line-height:10.6px;white-space:nowrap;padding:0px 1px;color:#181818;padding-left:2px"><div style="font-size:9px;letter-spacing:-0.622px;word-spacing:1.5px">No Materials Were Found !</div></div>
<div class="ta" style="left:540px;top:380px;width:198px;height:54px;line-height:10.6px;white-space:nowrap;padding:0px 1px;color:#181818;padding-left:3px"><div style="font-size:9px;letter-spacing:-0.740px;word-spacing:1.5px">No Tools Were Found !</div></div>
<div class="ta" style="left:744px;top:380px;width:197px;height:54px;line-height:10.6px;white-space:nowrap;padding:0px 1px;color:#181818;background:#d4d0c8;padding-left:2px"><div style="font-size:9px;letter-spacing:-0.659px;word-spacing:1.5px">191FR&nbsp; FORWARD WING TO BODY FAIRING PANEL</div></div>
<div class="sb" style="left:745px;top:420px;width:195px;height:13px;"></div>
<div class="sbb" style="left:745px;top:420px;width:13px;height:13px"></div><svg class="a" style="left:749px;top:423px" width="4" height="7" viewBox="0 0 4 7"><path d="M4 0 L4 7 L0 3.5 Z" fill="#000"/></svg>
<div class="sbb" style="left:758px;top:420px;width:72px;height:13px"></div>
<div class="sbb" style="left:927px;top:420px;width:13px;height:13px"></div><svg class="a" style="left:931px;top:423px" width="4" height="7" viewBox="0 0 4 7"><path d="M0 0 L0 7 L4 3.5 Z" fill="#000"/></svg>
<div class="a" style="left:948px;top:317px;width:167px;height:118px;background:#d8d8f8"></div>
<div class="a" style="left:948px;top:317px;width:167px;height:6px;background:#e2e2fa"></div>
<div class="a" style="left:955px;top:326px;width:11px;height:11px;background:#fff;border:1px solid;border-color:#8c8c8c #e4e4e4 #e4e4e4 #8c8c8c;box-shadow:inset 1px 1px 0 #c8c8c8"></div>
<div class="t " style="left:969.3px;top:325.5px;font-size:10px;letter-spacing:-0.815px;">:ETOPS</div>
<div class="a" style="left:1004px;top:326px;width:11px;height:11px;background:#fff;border:1px solid;border-color:#8c8c8c #e4e4e4 #e4e4e4 #8c8c8c;box-shadow:inset 1px 1px 0 #c8c8c8"></div>
<div class="t " style="left:1018.3px;top:325.5px;font-size:10px;letter-spacing:-0.813px;">:ETOPS II</div>
<div class="a" style="left:1060px;top:326px;width:11px;height:11px;background:#fff;border:1px solid;border-color:#8c8c8c #e4e4e4 #e4e4e4 #8c8c8c;box-shadow:inset 1px 1px 0 #c8c8c8"></div>
<div class="t " style="left:1074.3px;top:325.5px;font-size:10px;letter-spacing:-0.511px;">:DI (RII)</div>
<div class="a" style="left:955px;top:340px;width:11px;height:11px;background:#fff;border:1px solid;border-color:#8c8c8c #e4e4e4 #e4e4e4 #8c8c8c;box-shadow:inset 1px 1px 0 #c8c8c8"></div>
<div class="t " style="left:969.3px;top:339.5px;font-size:10px;letter-spacing:-0.421px;">:CAT 3</div>
<div class="a" style="left:1004px;top:340px;width:11px;height:11px;background:#fff;border:1px solid;border-color:#8c8c8c #e4e4e4 #e4e4e4 #8c8c8c;box-shadow:inset 1px 1px 0 #c8c8c8"></div>
<div class="t " style="left:1018.3px;top:339.5px;font-size:10px;letter-spacing:-0.324px;">:ALI</div>
<div class="a" style="left:1060px;top:340px;width:11px;height:11px;background:#fff;border:1px solid;border-color:#8c8c8c #e4e4e4 #e4e4e4 #8c8c8c;box-shadow:inset 1px 1px 0 #c8c8c8"></div>
<div class="t " style="left:1074.3px;top:339.5px;font-size:10px;letter-spacing:-0.872px;">:CDCCL</div>
<div class="a" style="left:955px;top:354px;width:11px;height:11px;background:#fff;border:1px solid;border-color:#8c8c8c #e4e4e4 #e4e4e4 #8c8c8c;box-shadow:inset 1px 1px 0 #c8c8c8"></div>
<div class="t " style="left:969.3px;top:353.5px;font-size:10px;letter-spacing:-0.678px;">:CR</div>
<div class="a" style="left:1004px;top:354px;width:11px;height:11px;background:#fff;border:1px solid;border-color:#8c8c8c #e4e4e4 #e4e4e4 #8c8c8c;box-shadow:inset 1px 1px 0 #c8c8c8"></div>
<div class="t " style="left:1018.3px;top:353.5px;font-size:10px;letter-spacing:-0.291px;">:AD</div>
<div class="a" style="left:1060px;top:354px;width:11px;height:11px;background:#fff;border:1px solid;border-color:#8c8c8c #e4e4e4 #e4e4e4 #8c8c8c;box-shadow:inset 1px 1px 0 #c8c8c8"></div>
<div class="t " style="left:1074.3px;top:353.5px;font-size:10px;letter-spacing:-0.709px;">:EWIS</div>
<div class="a" style="left:1060px;top:368px;width:11px;height:11px;background:#fff;border:1px solid;border-color:#8c8c8c #e4e4e4 #e4e4e4 #8c8c8c;box-shadow:inset 1px 1px 0 #c8c8c8"></div>
<div class="t " style="left:1074.3px;top:367.5px;font-size:10px;letter-spacing:-0.891px;">:CMR</div>
<div class="a" style="left:1060px;top:382px;width:11px;height:11px;background:#fff;border:1px solid;border-color:#8c8c8c #e4e4e4 #e4e4e4 #8c8c8c;box-shadow:inset 1px 1px 0 #c8c8c8"></div>
<div class="t " style="left:1074.3px;top:381.5px;font-size:10px;letter-spacing:-0.912px;">:CPCP</div>
<div class="t " style="left:954.5px;top:379px;text-decoration:underline;font-size:9px;letter-spacing:-0.323px;">Reference:</div>
<div class="ta" style="left:955px;top:389px;width:99px;height:45px;"></div>
<div class="btn " style="left:1060px;top:395px;width:53px;height:17px;padding-top:3px;background:#ffffc0;">Attach</div>
<div class="btn lav" style="left:1060px;top:415px;width:53px;height:18px;padding-top:3px;">Save</div>
<div class="grp" style="left:281px;top:443px;width:835px;height:224px;"></div>
<div class="glab" style="left:286px;top:436px;font-size:10.5px;letter-spacing:-0.236px;">TC Changes Information:</div>
<div class="btn lav" style="left:1011px;top:443px;width:43px;height:20px;padding-top:3.5px;padding-right:3px;">Excel</div>
<div class="btn lav" style="left:1063px;top:443px;width:43px;height:20px;padding-top:3.5px;">Close</div>
<div class="grid" style="left:289px;top:465px;width:819px;height:196px"><div class="hc" style="left:0px;width:30px;height:15.5px;line-height:14.5px">ID:</div><div class="hc" style="left:30px;width:86px;height:15.5px;line-height:14.5px">Updated_Date:</div><div class="hc" style="left:116px;width:85px;height:15.5px;line-height:14.5px">Updated_Time:</div><div class="hc" style="left:201px;width:72px;height:15.5px;line-height:14.5px">Updated_By:</div><div class="hc" style="left:273px;width:55px;height:15.5px;line-height:14.5px">AC_Reg:</div><div class="hc" style="left:328px;width:42px;height:15.5px;line-height:14.5px">AC_SN:</div><div class="hc" style="left:370px;width:79px;height:15.5px;line-height:14.5px">Task:</div><div class="hc" style="left:449px;width:73px;height:15.5px;line-height:14.5px">Basic_Task:</div><div class="hc" style="left:522px;width:274px;height:15.5px;line-height:14.5px">Task_Title:</div><div class="hc" style="left:796px;width:24px;height:15.5px;line-height:14.5px">JIC:</div><div class="row" style="top:15.50px;height:14.8px"><div class="hc" style="left:0px;width:30px;height:14.8px;line-height:13.0px">9490</div><div class="cell g" style="left:30px;width:86px;height:14.8px;line-height:15.0px">10/10/2024</div><div class="cell g" style="left:116px;width:85px;height:14.8px;line-height:15.0px">15:42</div><div class="cell g" style="left:201px;width:72px;height:14.8px;line-height:15.0px">DEM</div><div class="cell g" style="left:273px;width:55px;height:14.8px;line-height:15.0px">RA-00002</div><div class="cell g" style="left:328px;width:42px;height:14.8px;line-height:15.0px">32658</div><div class="cell g" style="left:370px;width:79px;height:14.8px;line-height:15.0px">20-040-06-02</div><div class="cell g" style="left:449px;width:73px;height:14.8px;line-height:15.0px">20-040-06</div><div class="cell g" style="left:522px;width:274px;height:14.8px;line-height:15.0px"><span style="font-size:10px;letter-spacing:-0.785px;">FNC - HIRF/L PROTECTION COMPONENTS - RH WTBF</span></div><div class="cell g" style="left:796px;width:24px;height:14.8px;line-height:15.0px">20-0</div></div><div class="row" style="top:30.30px;height:14.8px"><div class="hc" style="left:0px;width:30px;height:14.8px;line-height:13.0px">9489</div><div class="cell g" style="left:30px;width:86px;height:14.8px;line-height:15.0px">10/10/2024</div><div class="cell g" style="left:116px;width:85px;height:14.8px;line-height:15.0px">15:42</div><div class="cell g" style="left:201px;width:72px;height:14.8px;line-height:15.0px">DEM</div><div class="cell g" style="left:273px;width:55px;height:14.8px;line-height:15.0px">RA-00002</div><div class="cell g" style="left:328px;width:42px;height:14.8px;line-height:15.0px">32658</div><div class="cell g" style="left:370px;width:79px;height:14.8px;line-height:15.0px">20-040-06-02</div><div class="cell g" style="left:449px;width:73px;height:14.8px;line-height:15.0px">20-040-06</div><div class="cell g" style="left:522px;width:274px;height:14.8px;line-height:15.0px"><span style="font-size:10px;letter-spacing:-0.785px;">FNC - HIRF/L PROTECTION COMPONENTS - RH WTBF</span></div><div class="cell g" style="left:796px;width:24px;height:14.8px;line-height:15.0px">20-0</div></div><div class="row" style="top:45.10px;height:14.8px"><div class="hc" style="left:0px;width:30px;height:14.8px;line-height:13.0px">9488</div><div class="cell g" style="left:30px;width:86px;height:14.8px;line-height:15.0px">10/10/2024</div><div class="cell g" style="left:116px;width:85px;height:14.8px;line-height:15.0px">15:42</div><div class="cell g" style="left:201px;width:72px;height:14.8px;line-height:15.0px">DEM</div><div class="cell g" style="left:273px;width:55px;height:14.8px;line-height:15.0px">RA-00002</div><div class="cell g" style="left:328px;width:42px;height:14.8px;line-height:15.0px">32658</div><div class="cell g" style="left:370px;width:79px;height:14.8px;line-height:15.0px">20-040-06-02</div><div class="cell g" style="left:449px;width:73px;height:14.8px;line-height:15.0px">20-040-06</div><div class="cell g" style="left:522px;width:274px;height:14.8px;line-height:15.0px"><span style="font-size:10px;letter-spacing:-0.785px;">FNC - HIRF/L PROTECTION COMPONENTS - RH WTBF</span></div><div class="cell g" style="left:796px;width:24px;height:14.8px;line-height:15.0px">20-0</div></div></div>
<div class="sb" style="left:290px;top:645px;width:817px;height:14px;"></div>
<div class="sbb" style="left:290px;top:645px;width:14px;height:14px"></div><svg class="a" style="left:295px;top:648px" width="4" height="7" viewBox="0 0 4 7"><path d="M4 0 L4 7 L0 3.5 Z" fill="#000"/></svg>
<div class="sbb" style="left:304px;top:645px;width:14px;height:14px"></div>
<div class="sbb" style="left:1093px;top:645px;width:14px;height:14px"></div><svg class="a" style="left:1098px;top:648px" width="4" height="7" viewBox="0 0 4 7"><path d="M0 0 L0 7 L4 3.5 Z" fill="#000"/></svg>
<div class="btn lav" style="left:990px;top:674px;width:56px;height:36px;padding-top:21px;padding-right:3px;">History</div>
<div class="btn lav" style="left:1060px;top:674px;width:57px;height:36px;padding-top:21px;">Close</div>
<svg class="a" style="left:1007px;top:676px" width="22" height="21" viewBox="0 0 22 21"><path d="M5 1.5 H17 L20 4.5 V19 H5 Z" fill="#f6f7fa" stroke="#9aa0ac" stroke-width="0.9"/><path d="M8 5 H17 M8 8 H18 M11 11 H18 M11 14 H18" stroke="#b4bccc" stroke-width="0.9"/><circle cx="6.5" cy="8" r="4.6" fill="#c4eef6" stroke="#58a8c8" stroke-width="1.3"/><path d="M4.5 7.5 H8.5" stroke="#e8fbff" stroke-width="1"/><path d="M9.8 11.6 L15.5 18.5" stroke="#1c50c8" stroke-width="2.6" stroke-linecap="round"/></svg>
<svg class="a" style="left:1081px;top:678px" width="14" height="15" viewBox="0 0 14 15"><rect x="2.5" y="1.5" width="6" height="10" fill="#fff" stroke="#202020" stroke-width="1"/><path d="M1 3 L5 1.8 V13.6 L1 12 Z" fill="#7a8420" stroke="#3c4410" stroke-width="0.9"/><path d="M4 7 V8.2" stroke="#e8e0a0" stroke-width="0.8"/><path d="M7.5 12.6 Q11 13.4 11.4 10.4" stroke="#2030b8" stroke-width="1.5" fill="none"/><path d="M9.6 10.6 L11.6 8.6 L13.2 11 Z" fill="#2030b8"/></svg>
<svg class="a" style="left:0;top:0" width="1400" height="753" viewBox="0 0 1400 753"><polygon points="1005.6999999999999,500.0 1006.9,501.0 886.0,594.6 918.6,625.5" fill="#0d99ff"/><circle cx="900.0" cy="612.5" r="24.5" fill="#dcdcdc"/><circle cx="900.0" cy="612.5" r="23.7" fill="#1c242c"/><circle cx="900.0" cy="612.5" r="22.6" fill="#fff"/><circle cx="900.0" cy="612.5" r="21.7" fill="#0d99ff"/><g transform="translate(900.3,620.9) scale(1.14,1.02)"><text x="0" y="0" text-anchor="middle" font-family="Liberation Sans, sans-serif" font-weight="bold" font-size="22" fill="#fff" stroke="#fff" stroke-width="0.5">8</text></g></svg>
</div>
</body>
</html>
